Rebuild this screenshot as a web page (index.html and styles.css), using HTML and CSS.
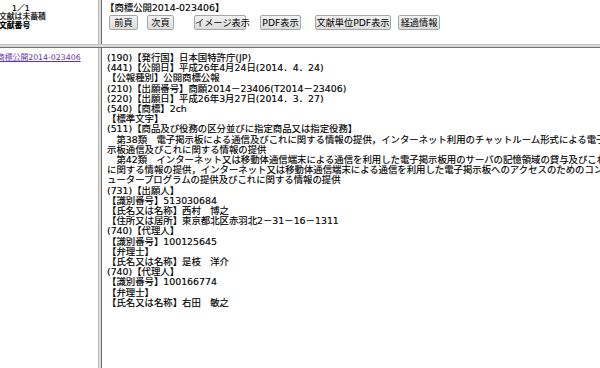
FILE: index.html
```html
<!DOCTYPE html>
<html lang="ja">
<head>
<meta charset="utf-8">
<title>商標公開2014-023406</title>
<link rel="stylesheet" href="styles.css">
</head>
<body>
<div class="frames">
  <div class="frame nav-info">
    <div class="count">1／1</div>
    <div class="status">文献は未蓄積</div>
    <div class="label">文献番号</div>
  </div>
  <div class="vdiv"></div>
  <div class="frame toolbar">
    <div class="doc-title">【商標公開2014-023406】</div>
    <div class="buttons">
      <button class="btn b1">前頁</button>
      <button class="btn b2">次頁</button>
      <button class="btn b3">イメージ表示</button>
      <button class="btn b4">PDF表示</button>
      <button class="btn b5">文献単位PDF表示</button>
      <button class="btn b6">経過情報</button>
    </div>
  </div>
  <div class="hdiv"></div>
  <div class="frame doc-list">
    <a class="doc-link" href="#">商標公開2014-023406</a>
  </div>
  <div class="vdiv"></div>
  <div class="frame content">
    <div class="body-text">(190)【発行国】日本国特許庁(JP)<br>(441)【公開日】平成26年4月24日(2014．4．24)<br>【公報種別】公開商標公報<br>(210)【出願番号】商願2014－23406(T2014－23406)<br>(220)【出願日】平成26年3月27日(2014．3．27)<br>(540)【商標】2ch<br>【標準文字】<br>(511)【商品及び役務の区分並びに指定商品又は指定役務】<br>　第38類　電子掲示板による通信及びこれに関する情報の提供，インターネット利用のチャットルーム形式による電子掲<br>示板通信及びこれに関する情報の提供<br>　第42類　インターネット又は移動体通信端末による通信を利用した電子掲示板用のサーバの記憶領域の貸与及びこれ<br>に関する情報の提供，インターネット又は移動体通信端末による通信を利用した電子掲示板へのアクセスのためのコンピ<br>ュータープログラムの提供及びこれに関する情報の提供<br>(731)【出願人】<br>【識別番号】513030684<br>【氏名又は名称】西村　博之<br>【住所又は居所】東京都北区赤羽北2－31－16－1311<br>(740)【代理人】<br>【識別番号】100125645<br>【弁理士】<br>【氏名又は名称】是枝　洋介<br>(740)【代理人】<br>【識別番号】100166774<br>【弁理士】<br>【氏名又は名称】右田　敏之</div>
  </div>
</div>
</body>
</html>
```

FILE: styles.css
```css
html, body {
  margin: 0;
  padding: 0;
  background: #ffffff;
}
body {
  width: 600px;
  height: 368px;
  overflow: hidden;
  font-family: "DejaVu Sans", "Noto Sans CJK JP", sans-serif;
  color: #000000;
}
.frames {
  display: grid;
  grid-template-columns: 98px 4px 498px;
  grid-template-rows: 44px 4px 320px;
  width: 600px;
  height: 368px;
}
.frame {
  overflow: hidden;
  background: #ffffff;
  min-width: 0;
}
.vdiv {
  box-sizing: border-box;
  background: #dadada;
  border-left: 1px solid #b8b8b8;
  border-right: 1px solid #6e6e6e;
}
.hdiv {
  grid-column: 1 / 4;
  box-sizing: border-box;
  background: #dadada;
  border-top: 1px solid #c4c4c4;
  border-bottom: 1px solid #6e6e6e;
}

/* top-left */
.nav-info {
  font-size: 7.8px;
  line-height: 8.4px;
  padding-top: 5px;
  margin-left: -1px;
  white-space: nowrap;
  -webkit-text-stroke: 0.2px #000;
}
.count {
  padding-left: 13px;
}
.label {
  font-weight: bold;
}

/* top-right */
.toolbar {
  padding: 3px 0 0 3px;
  font-size: 9.4px;
  white-space: nowrap;
}
.doc-title {
  line-height: 10px;
  -webkit-text-stroke: 0.15px #000;
}
.buttons {
  display: flex;
  margin-top: 2px;
  margin-left: 4px;
}
.btn {
  box-sizing: border-box;
  height: 15px;
  padding: 0;
  font-family: "DejaVu Sans", "Noto Sans CJK JP", sans-serif;
  font-size: 9.2px;
  line-height: 13px;
  color: #000000;
  background: linear-gradient(#f2f2f2, #dcdcdc);
  border: 1px solid #a6a6a6;
  border-radius: 2px;
  text-align: center;
}
.b1 { width: 29px; margin-right: 9px; }
.b2 { width: 27px; margin-right: 20px; }
.b3 { width: 52px; margin-right: 14px; }
.b4 { width: 41px; margin-right: 14px; }
.b5 { width: 76px; margin-right: 7px; }
.b6 { width: 42px; }

/* bottom-left */
.doc-list {
  padding-top: 5px;
  font-size: 7.8px;
  line-height: 9px;
  white-space: nowrap;
}
.doc-link {
  display: block;
  margin-left: -3px;
  color: #6236b0;
  text-decoration: underline;
}

/* bottom-right */
.content {
  padding: 5px 0 0 5px;
}
.body-text {
  font-size: 9.4px;
  line-height: 10.2px;
  white-space: nowrap;
  -webkit-text-stroke: 0.15px #000;
}
```
